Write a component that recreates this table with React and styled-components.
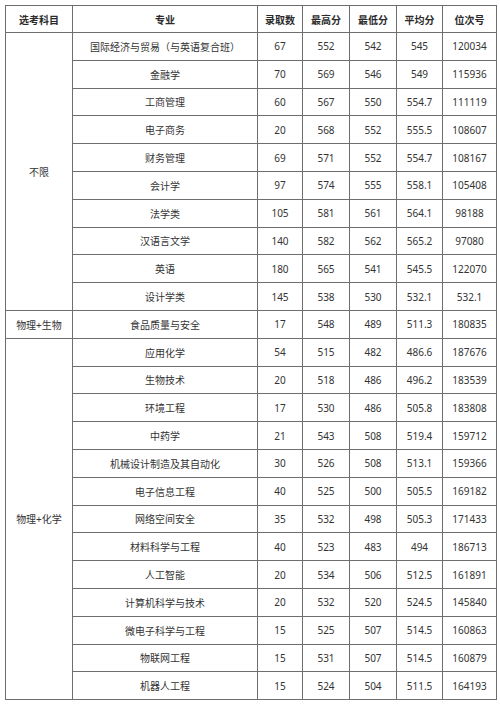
import React from "react";
import styled, { createGlobalStyle } from "styled-components";

const GlobalStyle = createGlobalStyle`
  html, body {
    margin: 0;
    padding: 0;
    background: #ffffff;
  }
  body {
    font-family: "Noto Sans", "Noto Sans CJK SC", sans-serif;
    color: #333333;
  }
`;

const Page = styled.div`
  padding: 5px 0 0 5px;
`;

const Table = styled.table`
  width: 491px;
  table-layout: fixed;
  border-collapse: collapse;
  font-size: 10px;
  color: #333333;
`;

const HeadCell = styled.th`
  height: 26px;
  padding: 0;
  border: 1px solid #6e6e6e;
  font-weight: 700;
  text-align: center;
  vertical-align: middle;
  color: #2a2a2a;
`;

const Cell = styled.td`
  height: 26.8px;
  padding: 0;
  border: 1px solid #6e6e6e;
  text-align: center;
  vertical-align: middle;
  white-space: nowrap;
`;

const widths = [67, 185, 45, 47, 47, 46, 54];
const heads = ["选考科目", "专业", "录取数", "最高分", "最低分", "平均分", "位次号"];

const groups = [
  {
    name: "不限",
    rows: [
      ["国际经济与贸易（与英语复合班）", "67", "552", "542", "545", "120034"],
      ["金融学", "70", "569", "546", "549", "115936"],
      ["工商管理", "60", "567", "550", "554.7", "111119"],
      ["电子商务", "20", "568", "552", "555.5", "108607"],
      ["财务管理", "69", "571", "552", "554.7", "108167"],
      ["会计学", "97", "574", "555", "558.1", "105408"],
      ["法学类", "105", "581", "561", "564.1", "98188"],
      ["汉语言文学", "140", "582", "562", "565.2", "97080"],
      ["英语", "180", "565", "541", "545.5", "122070"],
      ["设计学类", "145", "538", "530", "532.1", "532.1"],
    ],
  },
  {
    name: "物理+生物",
    rows: [["食品质量与安全", "17", "548", "489", "511.3", "180835"]],
  },
  {
    name: "物理+化学",
    rows: [
      ["应用化学", "54", "515", "482", "486.6", "187676"],
      ["生物技术", "20", "518", "486", "496.2", "183539"],
      ["环境工程", "17", "530", "486", "505.8", "183808"],
      ["中药学", "21", "543", "508", "519.4", "159712"],
      ["机械设计制造及其自动化", "30", "526", "508", "513.1", "159366"],
      ["电子信息工程", "40", "525", "500", "505.5", "169182"],
      ["网络空间安全", "35", "532", "498", "505.3", "171433"],
      ["材料科学与工程", "40", "523", "483", "494", "186713"],
      ["人工智能", "20", "534", "506", "512.5", "161891"],
      ["计算机科学与技术", "20", "532", "520", "524.5", "145840"],
      ["微电子科学与工程", "15", "525", "507", "514.5", "160863"],
      ["物联网工程", "15", "531", "507", "514.5", "160879"],
      ["机器人工程", "15", "524", "504", "511.5", "164193"],
    ],
  },
];

export default function App() {
  return (
    <Page>
      <GlobalStyle />
      <Table>
        <colgroup>
          {widths.map((w, i) => (
            <col key={i} style={{ width: w }} />
          ))}
        </colgroup>
        <thead>
          <tr>
            {heads.map((h) => (
              <HeadCell key={h}>{h}</HeadCell>
            ))}
          </tr>
        </thead>
        <tbody>
          {groups.map((g) =>
            g.rows.map((r, i) => (
              <tr key={g.name + i}>
                {i === 0 && <Cell rowSpan={g.rows.length}>{g.name}</Cell>}
                {r.map((v, j) => (
                  <Cell key={j}>{v}</Cell>
                ))}
              </tr>
            ))
          )}
        </tbody>
      </Table>
    </Page>
  );
}
